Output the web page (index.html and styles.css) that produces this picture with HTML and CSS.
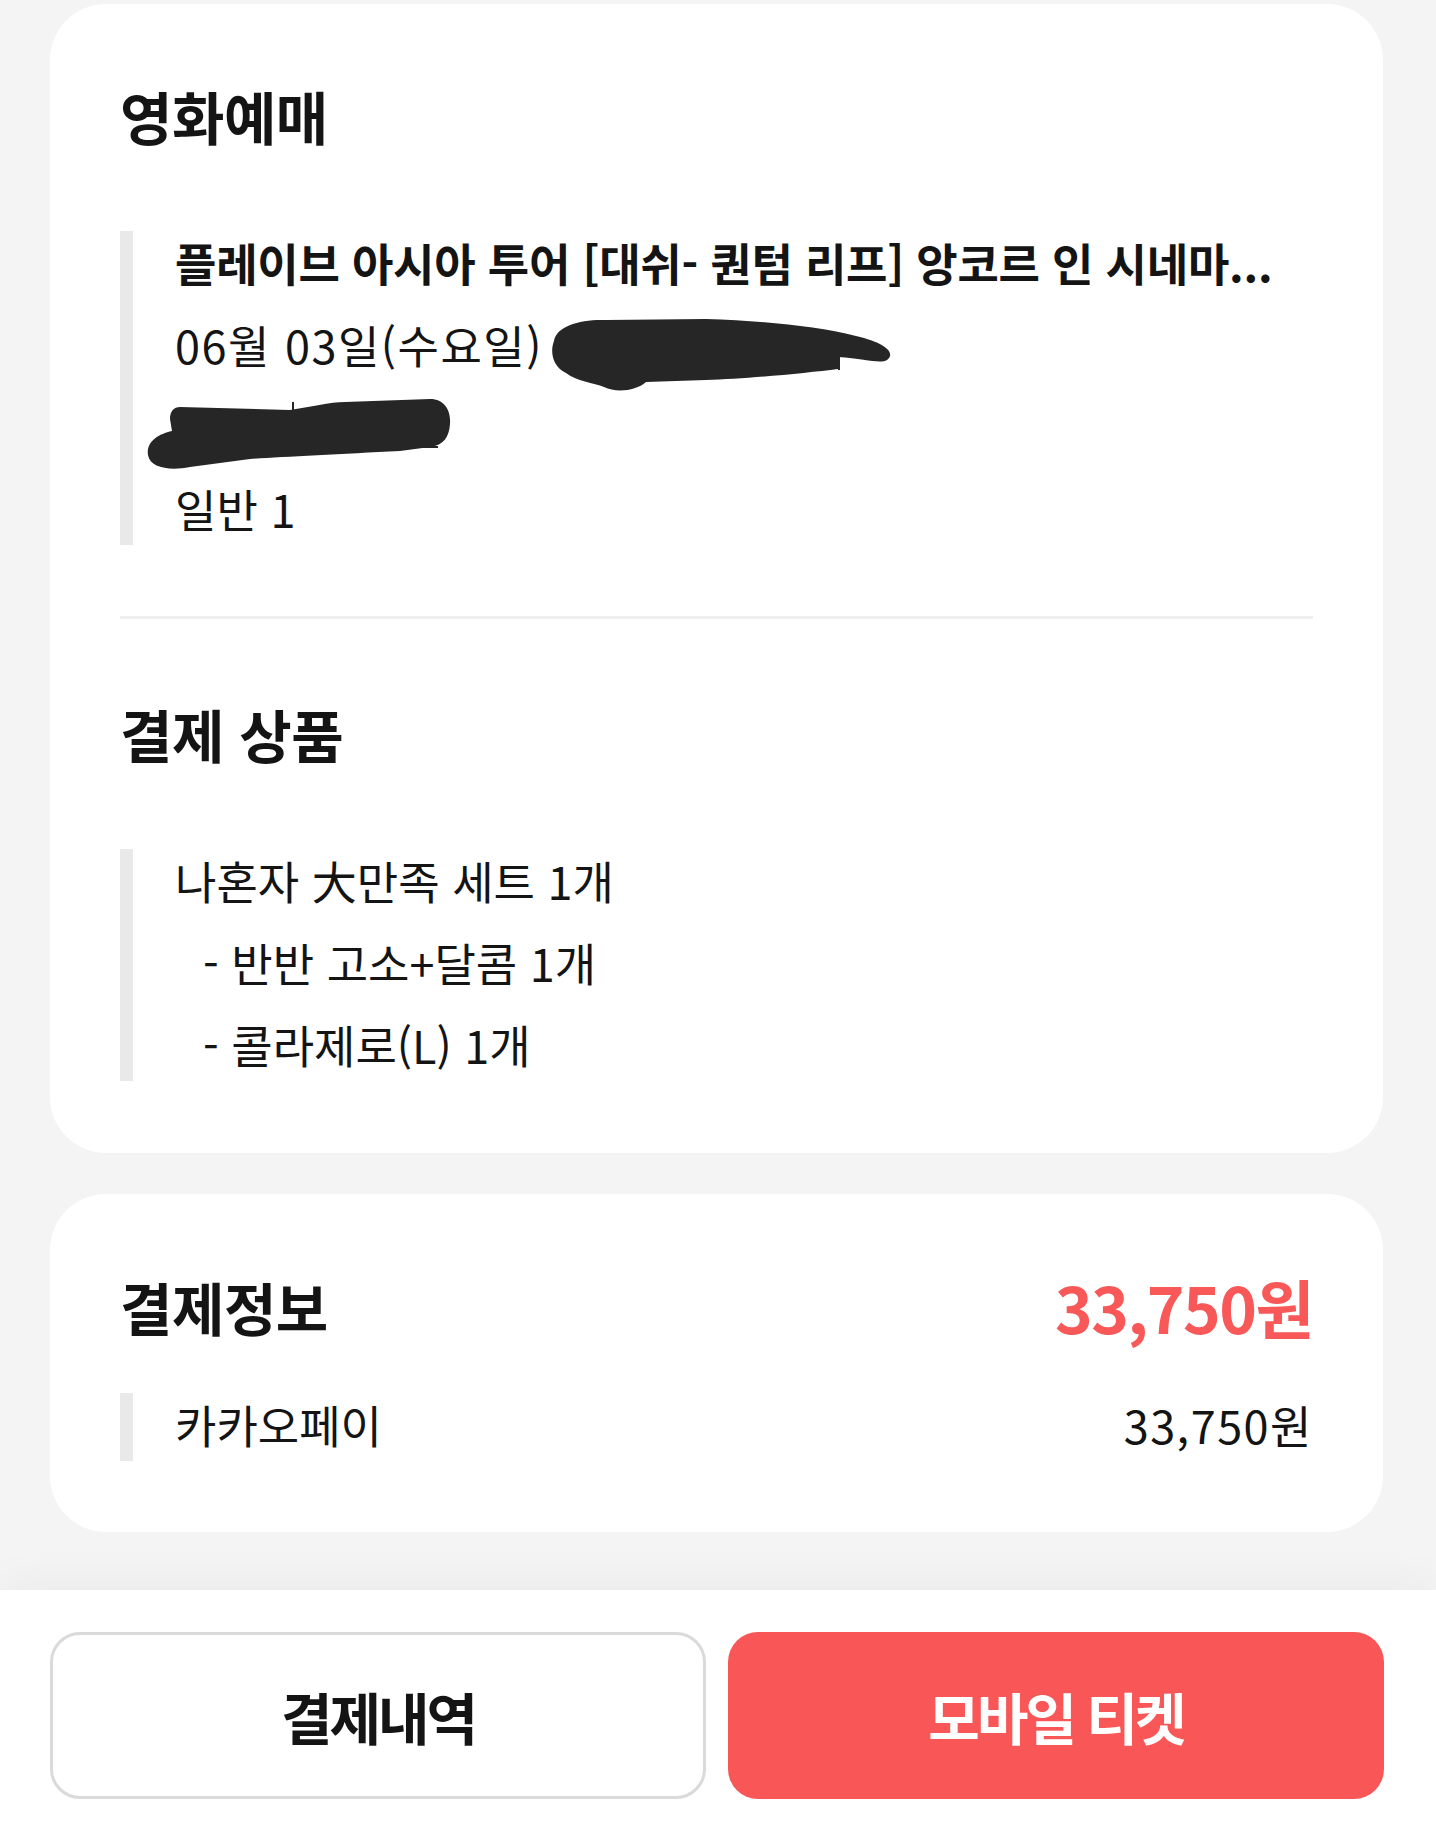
FILE: index.html
```html
<!DOCTYPE html>
<html lang="ko">
  <head>
    <meta charset="UTF-8">
    <title>예매 상세</title>
    <link rel="stylesheet" href="styles.css">
  </head>
  <body>
    <div class="page">
      <main class="content">
        <section class="card">
          <h2 class="card-title">영화예매</h2>
          <div class="quote">
            <p class="line line-strong">플레이브 아시아 투어 [대쉬- 퀀텀 리프] 앙코르 인 시네마...</p>
            <p class="line"><span class="num">06월 03일(수요일)</span><svg class="redact redact-date" viewBox="545 315 345 78" width="345" height="78"><path d="M548 340 C550 325 575 318 600 319 L700 318 C760 320 810 325 850 335 C880 342 890 352 881 359 C874 363 860 358 832 356 L832 368 C800 372 740 378 700 379 L640 381 C630 390 610 392 598 386 C588 382 570 380 560 372 C546 365 544 350 548 340 Z"/><rect x="832" y="355" width="2" height="14"/></svg></p>
            <p class="line"><svg class="redact redact-place" viewBox="145 398 308 74" width="308" height="74"><path d="M180 408 L290 411 C310 408 330 403 345 403 L430 400 C445 400 451 412 450 425 C449 438 444 446 430 448 L400 452 C340 455 280 458 250 460 L190 468 C170 472 150 469 148 456 C146 443 158 435 172 432 L170 420 C170 412 174 408 180 408 Z"/><rect x="292" y="403" width="2" height="8"/><rect x="420" y="447" width="18" height="2"/></svg></p>
            <p class="line">일반 1</p>
          </div>
          <hr class="divider">
          <h2 class="card-title">결제 상품</h2>
          <div class="quote">
            <p class="line">나혼자 大만족 세트 1개</p>
            <p class="line line-sub">- 반반 고소+달콤 1개</p>
            <p class="line line-sub">- 콜라제로(L) 1개</p>
          </div>
        </section>

        <section class="card card-pay">
          <div class="pay-head">
            <h2 class="card-title">결제정보</h2>
            <span class="pay-total">33,750원</span>
          </div>
          <div class="quote">
            <p class="line pay-row"><span>카카오페이</span><span class="num">33,750원</span></p>
          </div>
        </section>
      </main>

      <footer class="actions">
        <button class="btn btn-outline">결제내역</button>
        <button class="btn btn-primary">모바일 티켓</button>
      </footer>
    </div>
  </body>
</html>
```

FILE: styles.css
```css
body {
  margin: 0;
  background: #f4f4f4;
  color: #141414;
  font-family: "Noto Sans CJK KR", "Noto Sans", sans-serif;
}

.page {
  height: 1826px;
  display: flex;
  flex-direction: column;
  overflow: hidden;
}

.content {
  flex-grow: 1;
  display: flex;
  flex-direction: column;
  gap: 41px;
  padding: 4px 53px 0 50px;
}

.card {
  background: #fff;
  border-radius: 56px;
  padding: 75px 70px 72px;
}
.card-pay {
  padding-top: 76px;
  padding-bottom: 71px;
}

.card-title {
  margin: 0 0 79px;
  font-size: 57px;
  line-height: 73px;
  font-weight: 700;
  letter-spacing: -0.5px;
}

.quote {
  display: flex;
  flex-direction: column;
  gap: 14px;
  border-left: 13px solid #e9e9e9;
  padding-left: 42px;
}

.line {
  margin: 0;
  height: 68px;
  font-size: 45px;
  line-height: 64px;
  padding-bottom: 4px;
  box-sizing: border-box;
  white-space: nowrap;
}
.line-strong {
  font-weight: 700;
  letter-spacing: -0.25px;
  overflow: hidden;
  text-overflow: ellipsis;
}
.line-sub {
  padding-left: 28px;
}
.num {
  letter-spacing: 1.5px;
}

.redact {
  vertical-align: top;
  fill: #262626;
}
.redact-date {
  margin: 3px 0 -17px 8px;
}
.redact-place {
  margin: 2px 0 -12px -30px;
}

.divider {
  margin: 71px 0 78px;
  border: 0;
  height: 3px;
  background: #efefef;
}

.pay-head {
  display: flex;
  justify-content: space-between;
  align-items: center;
  margin-bottom: 50px;
}
.pay-head .card-title {
  margin: 0;
}
.pay-total {
  color: #f85858;
  font-size: 64px;
  line-height: 73px;
  font-weight: 700;
  letter-spacing: -1.5px;
}

.pay-row {
  display: flex;
  justify-content: space-between;
}

.actions {
  height: 236px;
  box-sizing: border-box;
  padding: 42px 52px 0 50px;
  background: #fff;
  box-shadow: 0 -12px 40px rgba(0, 0, 0, 0.035);
  display: grid;
  grid-template-columns: 1fr 1fr;
  gap: 22px;
  align-items: start;
}

.btn {
  height: 167px;
  border-radius: 30px;
  font-family: inherit;
  font-size: 56px;
  font-weight: 700;
  letter-spacing: -3px;
  cursor: pointer;
}
.btn-outline {
  background: #fff;
  color: #141414;
  border: 3px solid #dadada;
}
.btn-primary {
  background: #f95757;
  color: #fff;
  border: 0;
}
```
